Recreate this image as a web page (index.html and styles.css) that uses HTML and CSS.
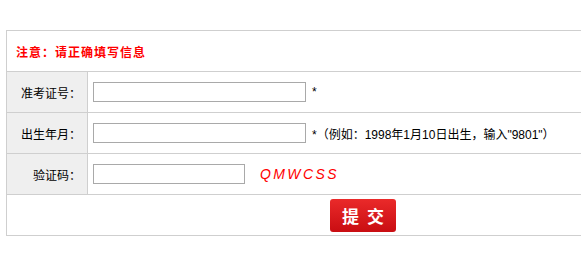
FILE: index.html
```html
<!DOCTYPE html>
<html lang="zh-CN">
<head>
<meta charset="utf-8">
<title>填写信息</title>
<link rel="stylesheet" href="styles.css">
</head>
<body>
<form class="form">
  <table class="form-table">
    <tr>
      <td class="notice" colspan="2">注意：请正确填写信息</td>
    </tr>
    <tr>
      <th class="label">准考证号：</th>
      <td class="field"><input class="input input-long" type="text"><span class="hint">*</span></td>
    </tr>
    <tr>
      <th class="label">出生年月：</th>
      <td class="field"><input class="input input-long" type="text"><span class="hint">*（例如：1998年1月10日出生，输入"9801"）</span></td>
    </tr>
    <tr>
      <th class="label">验证码：</th>
      <td class="field"><input class="input input-short" type="text"><span class="captcha">QMWCSS</span></td>
    </tr>
    <tr>
      <td class="actions" colspan="2"><button class="submit" type="button">提 交</button></td>
    </tr>
  </table>
</form>
</body>
</html>
```
FILE: styles.css
```css
html {
  overflow: hidden;
}
body {
  margin: 0;
  background: #fff;
  font-family: "Liberation Sans", "Noto Sans CJK SC", sans-serif;
  font-size: 12px;
  color: #000;
}
.form {
  padding: 30px 0 0 6px;
}
.form-table {
  width: 576px;
  border-collapse: collapse;
  border: 1px solid #cfcfcf;
}
.form-table td,
.form-table th {
  border: 1px solid #cfcfcf;
  height: 41px;
  padding: 0;
  box-sizing: border-box;
}
.notice {
  color: #f00;
  font-weight: bold;
  letter-spacing: 1px;
  padding-left: 9px !important;
}
.label {
  width: 81px;
  background: #efefef;
  font-weight: normal;
  text-align: right;
  padding-right: 6px !important;
}
.field {
  padding-left: 5px !important;
}
.input {
  box-sizing: border-box;
  height: 20px;
  border: 1px solid #a9a9a9;
  margin: 0;
  padding: 0 3px;
  vertical-align: middle;
  font-size: 12px;
}
.input-long {
  width: 213px;
}
.input-short {
  width: 152px;
}
.hint {
  margin-left: 6px;
  vertical-align: middle;
}
.captcha {
  margin-left: 15px;
  color: #f00;
  font-style: italic;
  font-size: 14px;
  letter-spacing: 2.4px;
  vertical-align: middle;
}
.actions {
  padding-left: 323px !important;
}
.submit {
  display: block;
  width: 66px;
  height: 33px;
  border: 0;
  border-radius: 3px;
  background: linear-gradient(#ea2a2a, #c90d12);
  color: #fff;
  font-family: "Noto Sans CJK SC", sans-serif;
  font-size: 17px;
  font-weight: bold;
  letter-spacing: 2px;
  padding: 0 0 0 2px;
}
```
